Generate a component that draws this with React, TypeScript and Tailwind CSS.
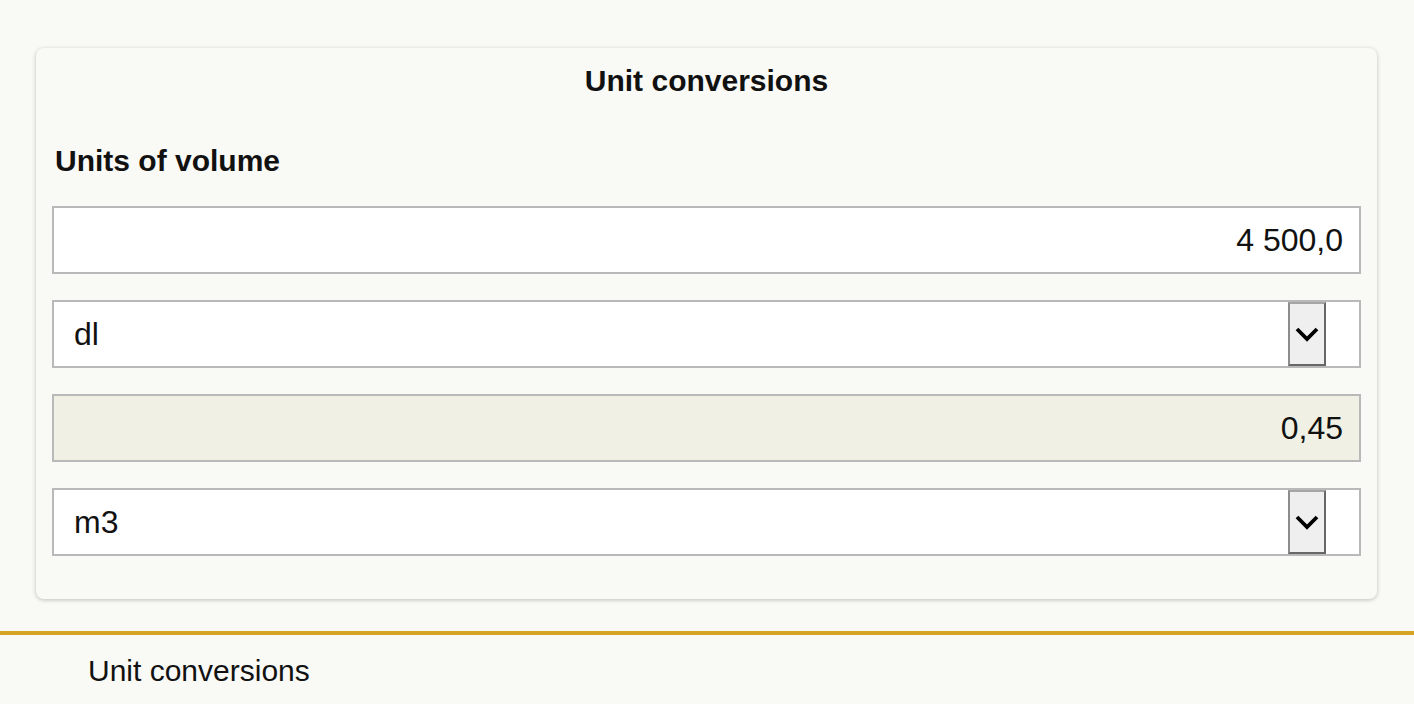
import React from 'react';

type Field =
    | { kind: 'input'; value: string; readOnly?: boolean }
    | { kind: 'select'; value: string };

const FIELDS: Field[] = [
    { kind: 'input', value: '4 500,0' },
    { kind: 'select', value: 'dl' },
    { kind: 'input', value: '0,45', readOnly: true },
    { kind: 'select', value: 'm3' },
];

function Chevron() {
    return (
        <svg width="26" height="20" viewBox="0 0 26 20" fill="none">
            <polyline points="3,5 13,15 23,5" stroke="#000" strokeWidth="3.8" strokeLinecap="butt" strokeLinejoin="miter" />
        </svg>
    );
}

function FieldBox({ field }: { field: Field }) {
    if (field.kind === 'select') {
        return (
            <div className="h-[68px] flex items-stretch border-2 border-[#b9b9b9] bg-white">
                <div className="flex-1 flex items-center pl-5 text-[32px]">{field.value}</div>
                <div className="w-[38px] mr-[33px] flex items-center justify-center bg-[#efefef] border-2 border-t-[#a5a5a5] border-l-[#8c8c8c] border-r-[#676767] border-b-[#676767]">
                    <Chevron />
                </div>
            </div>
        );
    }
    return (
        <div
            className={`h-[68px] flex items-center justify-end pr-4 border-2 border-[#b9b9b9] text-[32px] ${field.readOnly ? 'bg-[#f0f1e4]' : 'bg-white'}`}
        >
            {field.value}
        </div>
    );
}

export default function App() {
    return (
        <div className="min-h-screen bg-[#f9f9f5] pt-12 text-[#111] font-['Liberation_Sans',Arial,sans-serif]">
            {/* Converter card */}
            <div className="ml-[36px] mr-[37px] rounded-lg bg-[#f9f9f5] shadow-[0_1px_4px_rgba(0,0,0,0.24)] px-4 pt-4 pb-[43px]">
                <h2 className="text-center text-[30px] leading-[34px] font-bold">Unit conversions</h2>
                <h3 className="mt-[46px] ml-[3px] text-[30px] leading-[34px] font-bold">Units of volume</h3>
                <div className="mt-[28px] flex flex-col gap-[26px]">
                    {FIELDS.map((f, i) => (
                        <FieldBox key={i} field={f} />
                    ))}
                </div>
            </div>

            {/* Footer */}
            <div className="mt-8 h-1 bg-[#d5a424]" />
            <p className="mt-[19px] pl-[88px] text-[30px] leading-[34px]">Unit conversions</p>
        </div>
    );
}
